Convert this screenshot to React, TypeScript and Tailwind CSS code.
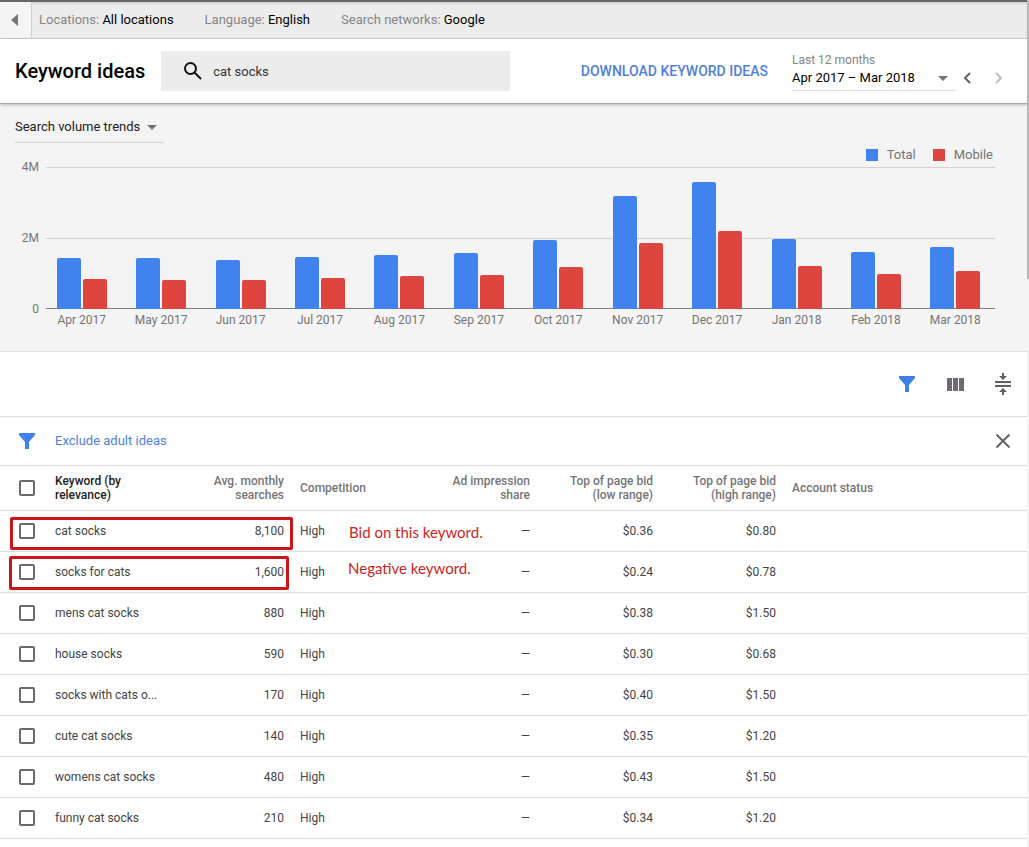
import { useState } from "react";

interface MonthVolume {
    month: string;
    total: number;
    mobile: number;
}

interface KeywordRow {
    keyword: string;
    searches: string;
    competition: string;
    low: string;
    high: string;
}

// share of the plot height (4M) that each bar takes, in 142nds
const PLOT_UNITS = 142;

const volumes: MonthVolume[] = [
    { month: "Apr 2017", total: 51, mobile: 30 },
    { month: "May 2017", total: 51, mobile: 29 },
    { month: "Jun 2017", total: 49, mobile: 29 },
    { month: "Jul 2017", total: 52, mobile: 31 },
    { month: "Aug 2017", total: 54, mobile: 33 },
    { month: "Sep 2017", total: 56, mobile: 34 },
    { month: "Oct 2017", total: 69, mobile: 42 },
    { month: "Nov 2017", total: 113, mobile: 66 },
    { month: "Dec 2017", total: 127, mobile: 78 },
    { month: "Jan 2018", total: 70, mobile: 43 },
    { month: "Feb 2018", total: 57, mobile: 35 },
    { month: "Mar 2018", total: 62, mobile: 38 },
];

const keywords: KeywordRow[] = [
    { keyword: "cat socks", searches: "8,100", competition: "High", low: "$0.36", high: "$0.80" },
    { keyword: "socks for cats", searches: "1,600", competition: "High", low: "$0.24", high: "$0.78" },
    { keyword: "mens cat socks", searches: "880", competition: "High", low: "$0.38", high: "$1.50" },
    { keyword: "house socks", searches: "590", competition: "High", low: "$0.30", high: "$0.68" },
    { keyword: "socks with cats o...", searches: "170", competition: "High", low: "$0.40", high: "$1.50" },
    { keyword: "cute cat socks", searches: "140", competition: "High", low: "$0.35", high: "$1.20" },
    { keyword: "womens cat socks", searches: "480", competition: "High", low: "$0.43", high: "$1.50" },
    { keyword: "funny cat socks", searches: "210", competition: "High", low: "$0.34", high: "$1.20" },
];

function Caret() {
    return (
        <svg width="10" height="5" viewBox="0 0 10 5" fill="#757575" aria-hidden="true">
            <path d="M0 0h10L5 5z" />
        </svg>
    );
}

function FilterIcon() {
    return (
        <svg width="16" height="16" viewBox="0 0 16 16" fill="#3f80ea" aria-hidden="true">
            <path d="M0 0h16v2l-6 7v7H6V9L0 2z" />
        </svg>
    );
}

function Chevron({ left }: { left?: boolean }) {
    return (
        <svg width="8" height="12" viewBox="0 0 8 12" fill="none" stroke={left ? "#616161" : "#bdbdbd"} strokeWidth="2" aria-hidden="true">
            <path d={left ? "M7 1L2 6l5 5" : "M1 1l5 5-5 5"} />
        </svg>
    );
}

function CheckBox({ label }: { label: string }) {
    return (
        <input
            type="checkbox"
            aria-label={label}
            className="ml-[19px] block size-4 appearance-none rounded-xs border-2 border-[#6b6b6b] bg-white checked:bg-[#6b6b6b]"
        />
    );
}

function TopBar() {
    return (
        <div className="flex h-[39px] items-stretch border-t-2 border-b border-t-[#666] border-b-[#d0d0d0] bg-[#ececec] text-[13px] text-[#858585] shadow-[inset_0_2px_2px_#d4d4d4]">
            <button type="button" aria-label="Back" className="flex w-8 items-center border-r border-[#d0d0d0] bg-[#f4f4f4] pl-[11px]">
                <svg width="7" height="12" viewBox="0 0 7 12" fill="#757575">
                    <path d="M7 0v12L0 6z" />
                </svg>
            </button>
            <div className="flex items-center gap-[31px] pl-[7px]">
                <p>Locations: <span className="text-black">All locations</span></p>
                <p>Language: <span className="text-black">English</span></p>
                <p>Search networks: <span className="text-black">Google</span></p>
            </div>
        </div>
    );
}

function Header() {
    const [search, setSearch] = useState("cat socks");

    return (
        <header className="relative flex h-[65px] items-center border-b border-[#a8a8a8] bg-white pr-6 pl-[15px] shadow-[0_1px_3px_rgba(0,0,0,0.25)]">
            <h1 className="text-xl font-medium text-black">Keyword ideas</h1>
            <label className="ml-4 flex h-10 w-[349px] items-center gap-[11px] bg-[#ececec] pl-[23px]">
                <svg width="18" height="18" viewBox="0 0 18 18" fill="none" stroke="#111" strokeWidth="2" aria-hidden="true">
                    <circle cx="6.5" cy="6.5" r="5.5" />
                    <path d="M10.5 10.5l6.5 6.5" />
                </svg>
                <input
                    type="text"
                    aria-label="Search keywords"
                    value={search}
                    onChange={(e) => setSearch(e.target.value)}
                    className="min-w-0 flex-1 bg-transparent pt-0.5 text-[13px] text-[#333] outline-none"
                />
            </label>
            <button type="button" className="ml-auto text-sm font-medium text-[#4f7fdc]">DOWNLOAD KEYWORD IDEAS</button>
            <button type="button" className="ml-6 flex h-10 w-[163px] flex-col justify-start border-b border-[#dcdcdc] text-left">
                <span className="text-xs leading-[18px] text-[#858585]">Last 12 months</span>
                <span className="flex items-center justify-between self-stretch pr-[7px] text-[13px] leading-[18px] text-black">
                    Apr 2017 – Mar 2018
                    <Caret />
                </span>
            </button>
            <div className="mt-3.5 ml-2 flex gap-6">
                <button type="button" aria-label="Previous period"><Chevron left /></button>
                <button type="button" aria-label="Next period"><Chevron /></button>
            </div>
        </header>
    );
}

function TrendsChart() {
    return (
        <section className="h-[248px] border-b border-[#e0e0e0] bg-[#f4f4f4] pt-2">
            <div className="flex h-[55px] items-start justify-between pr-[34px] pl-[15px]">
                <button type="button" className="flex h-[31px] w-[149px] items-center gap-[7px] border-b border-[#d6d6d6] text-[13px] text-[#222]">
                    Search volume trends
                    <Caret />
                </button>
                <div className="mt-[33px] flex items-center text-[13px] text-[#757575]">
                    <span className="mr-[9px] size-3 bg-[#4083ee]" />
                    Total
                    <span className="mr-[9px] ml-[17px] size-3 bg-[#de453f]" />
                    Mobile
                </div>
            </div>
            <div className="flex pr-8">
                <div className="-mt-2 flex h-[158px] w-[39px] flex-col justify-between text-right text-xs leading-4 text-[#757575]">
                    <span>4M</span>
                    <span>2M</span>
                    <span>0</span>
                </div>
                <div className="flex-1 pl-[3px]">
                    <div className="grid h-[142px]">
                        <div className="col-start-1 row-start-1 ml-1 flex flex-col border-t border-b border-t-[#d2d2d2] border-b-[#808080]">
                            <div className="flex-1 border-b border-[#d2d2d2]" />
                            <div className="flex-1" />
                        </div>
                        <div className="col-start-1 row-start-1 flex items-end">
                            {volumes.map((v) => (
                                <div key={v.month} className="flex h-full flex-1 items-end justify-center gap-0.5">
                                    <div className="w-6 rounded-t-xs bg-[#4083ee]" style={{ height: `${(v.total / PLOT_UNITS) * 100}%` }} />
                                    <div className="w-6 rounded-t-xs bg-[#de453f]" style={{ height: `${(v.mobile / PLOT_UNITS) * 100}%` }} />
                                </div>
                            ))}
                        </div>
                    </div>
                    <div className="mt-[3px] flex text-center text-xs text-[#757575]">
                        {volumes.map((v) => (
                            <span key={v.month} className="flex-1">{v.month}</span>
                        ))}
                    </div>
                </div>
            </div>
        </section>
    );
}

function Toolbar() {
    return (
        <>
            <div className="flex h-[65px] items-center justify-end border-b border-[#dcdcdc] pr-4">
                <button type="button" aria-label="Filter"><FilterIcon /></button>
                <button type="button" aria-label="Columns" className="ml-8">
                    <svg width="17" height="13" viewBox="0 0 17 13" fill="#6f6a72">
                        <path d="M0 0h5v13H0zM6 0h5v13H6zM12 0h5v13h-5z" />
                    </svg>
                </button>
                <button type="button" aria-label="Row density" className="ml-[31px]">
                    <svg width="16" height="22" viewBox="0 0 16 22" fill="#616161">
                        <path d="M0 8h16v2H0zM0 12h16v2H0zM7 0h2v3h3L8 7 4 3h3zM7 22h2v-3h3l-4-4-4 4h3z" />
                    </svg>
                </button>
            </div>
            <div className="flex h-[49px] items-center border-b border-[#dcdcdc] pr-4 pl-[19px]">
                <FilterIcon />
                <a href="#filters" className="ml-5 text-[13px] text-[#4f7fdc]">Exclude adult ideas</a>
                <button type="button" aria-label="Remove filter" className="ml-auto">
                    <svg width="16" height="14" viewBox="0 0 16 14" fill="none" stroke="#616161" strokeWidth="2">
                        <path d="M1.5 0.5l13 13M14.5 0.5l-13 13" />
                    </svg>
                </button>
            </div>
        </>
    );
}

function KeywordTable() {
    return (
        <table className="w-full table-fixed text-xs text-[#444]">
            <colgroup>
                <col className="w-[47px]" />
                <col className="w-[122px]" />
                <col className="w-[123px]" />
                <col className="w-[123px]" />
                <col className="w-[123px]" />
                <col className="w-[123px]" />
                <col className="w-[123px]" />
                <col />
            </colgroup>
            <thead>
                <tr className="h-11 border-b border-[#dcdcdc] leading-[14px] text-[#757575] [&>th]:font-medium">
                    <th scope="col"><CheckBox label="Select all keywords" /></th>
                    <th scope="col" className="px-2 text-left text-[#222]">Keyword (by<br />relevance)</th>
                    <th scope="col" className="px-2 text-right">Avg. monthly<br />searches</th>
                    <th scope="col" className="px-2 text-left">Competition</th>
                    <th scope="col" className="px-2 text-right">Ad impression<br />share</th>
                    <th scope="col" className="px-2 text-right">Top of page bid<br />(low range)</th>
                    <th scope="col" className="px-2 text-right">Top of page bid<br />(high range)</th>
                    <th scope="col" className="px-2 text-left">Account status</th>
                </tr>
            </thead>
            <tbody>
                {keywords.map((row, index) => (
                    <tr key={row.keyword} className="relative h-[41px] border-b border-[#dcdcdc]">
                        <td>
                            <CheckBox label={row.keyword} />
                            {index === 0 && <div className="pointer-events-none absolute top-[7px] left-2.5 h-[33px] w-[283px] rounded-xs border-3 border-[#cc1518]" />}
                            {index === 1 && <div className="pointer-events-none absolute top-[5px] left-[9px] h-[34px] w-[280px] rounded-xs border-3 border-[#cc1518]" />}
                        </td>
                        <td className="px-2 whitespace-nowrap">{row.keyword}</td>
                        <td className="px-2 text-right">{row.searches}</td>
                        <td className="px-2">
                            {row.competition}
                            {index === 0 && <span className="absolute top-3 left-[349px] font-[Lato,sans-serif] text-[15px] leading-5 text-[#cc1f24]">Bid on this keyword.</span>}
                            {index === 1 && <span className="absolute top-[7px] left-[348px] font-[Lato,sans-serif] text-[15px] leading-5 text-[#cc1f24]">Negative keyword.</span>}
                        </td>
                        <td className="px-2 text-right">—</td>
                        <td className="px-2 text-right">{row.low}</td>
                        <td className="px-2 text-right">{row.high}</td>
                        <td />
                    </tr>
                ))}
            </tbody>
        </table>
    );
}

export default function App() {
    return (
        <div className="relative min-h-screen bg-white pr-0.5 font-[Roboto,sans-serif]">
            <TopBar />
            <Header />
            <TrendsChart />
            <Toolbar />
            <KeywordTable />
            <div className="absolute inset-y-0 right-0 w-0.5 bg-[#f4f4f4]">
                <div className="h-[279px] bg-[#b8b8b8]" />
            </div>
        </div>
    );
}
